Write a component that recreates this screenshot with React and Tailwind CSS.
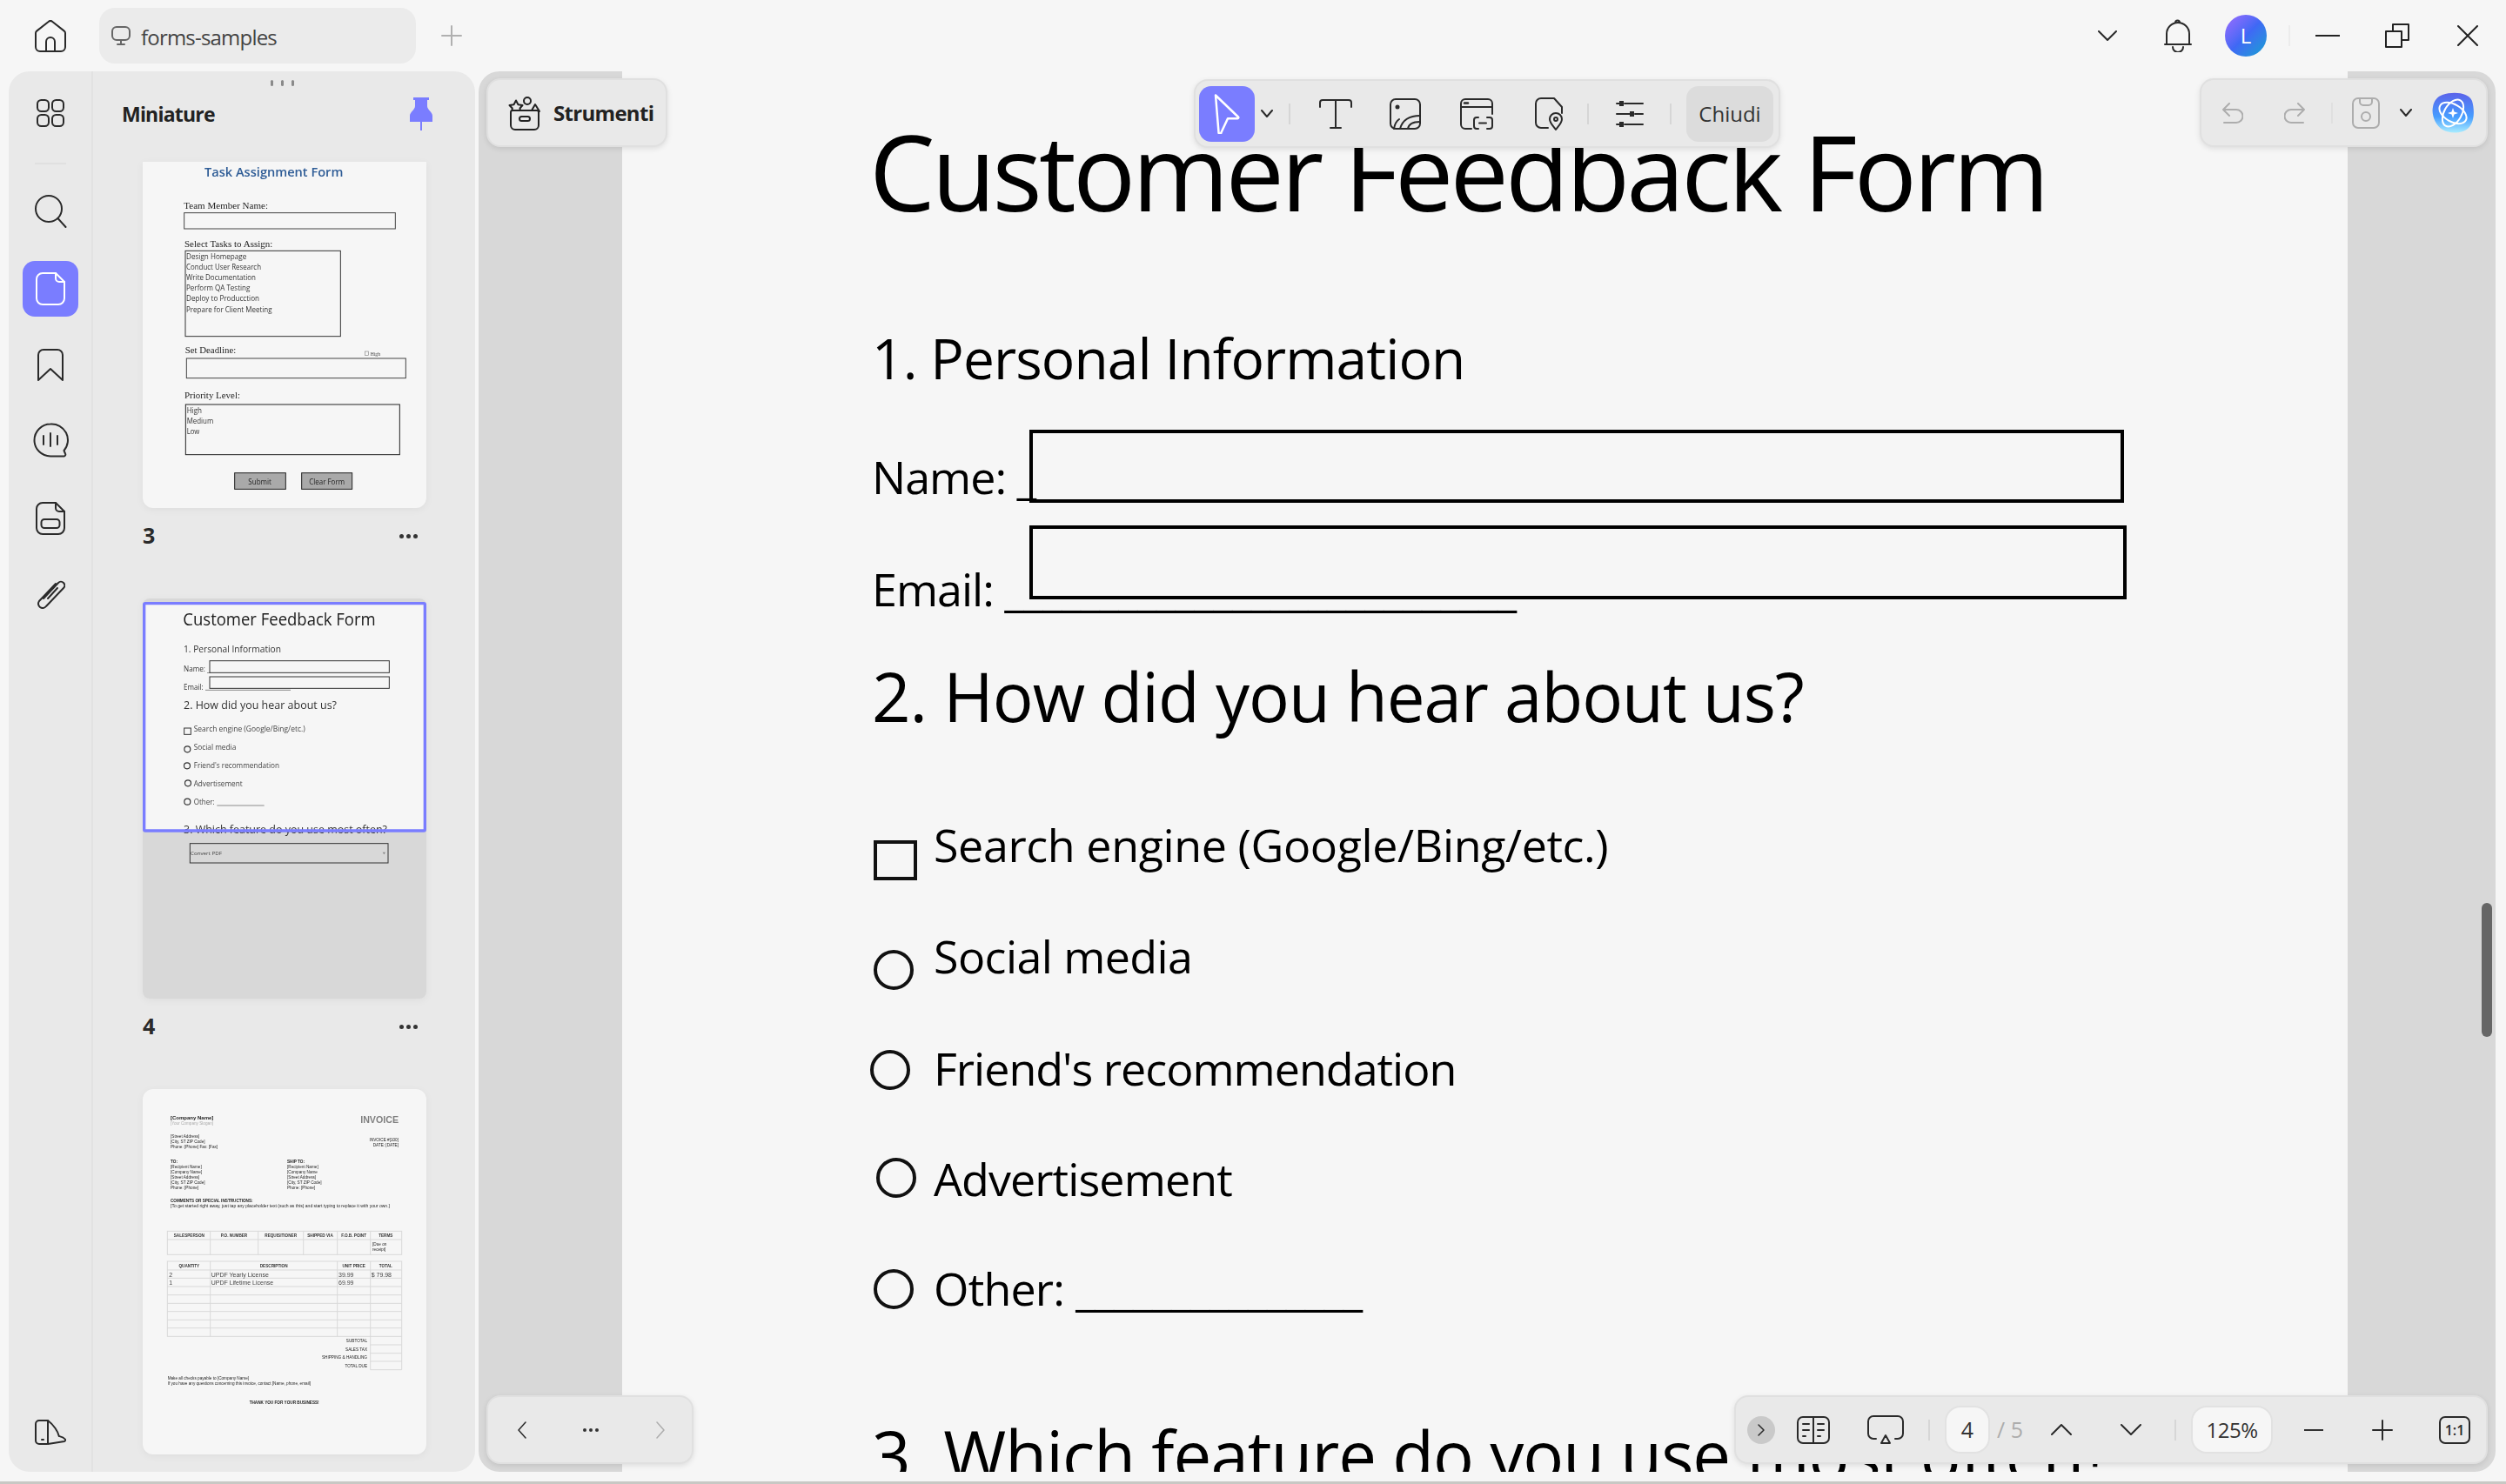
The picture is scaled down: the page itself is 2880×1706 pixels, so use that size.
import React from 'react';

const ACCENT = '#7a7dff';

// shared icon wrapper, size and viewBox are the same in most cases
const Ic = ({ w, h, vb, sw = 2, className = '', children }) => (
  <svg
    width={w}
    height={h}
    viewBox={vb || `0 0 ${w} ${h}`}
    fill="none"
    stroke="currentColor"
    strokeWidth={sw}
    strokeLinecap="round"
    strokeLinejoin="round"
    className={`shrink-0 ${className}`}
  >
    {children}
  </svg>
);

const Chevron = ({ dir = 'down', w = 14, h = 8, sw = 2, className = '' }) => {
  const d = {
    down: `M1 1L${w / 2} ${h - 1}L${w - 1} 1`,
    up: `M1 ${h - 1}L${w / 2} 1L${w - 1} ${h - 1}`,
    left: `M${w - 1} 1L1 ${h / 2}L${w - 1} ${h - 1}`,
    right: `M1 1L${w - 1} ${h / 2}L1 ${h - 1}`,
  }[dir];
  return (
    <Ic w={w} h={h} sw={sw} className={className}>
      <path d={d} />
    </Ic>
  );
};

const Sep = ({ c = 'bg-[#d6d6d6]' }) => <div className={`w-[2px] h-[24px] shrink-0 ${c}`} />;

const FloatBar = ({ className = '', children }) => (
  <div
    className={`absolute flex items-center h-[79px] bg-[#e9e9e9] border-2 border-[#e0e0e0] rounded-[16px] shadow-[0_2px_6px_rgba(0,0,0,0.1)] ${className}`}
  >
    {children}
  </div>
);

const RailButton = ({ h, active, children }) => (
  <div className={`flex items-center justify-center w-full ${h}`}>
    <div
      className={`flex items-center justify-center w-[64px] h-[64px] rounded-[14px] shrink-0 ${
        active ? 'bg-[#7a7dff] text-white' : 'text-[#2a2a2a]'
      }`}
    >
      {children}
    </div>
  </div>
);

const Rail = () => (
  <div className="w-[97px] shrink-0 flex flex-col items-center border-r-2 border-[#e2e2e2] pt-[1px] pb-[30px]">
    <RailButton h="h-[94px]">
      <Ic w={32} h={32}>
        <rect x="1" y="1" width="13" height="13" rx="4.5" />
        <rect x="18" y="1" width="13" height="13" rx="4.5" />
        <rect x="1" y="18" width="13" height="13" rx="4.5" />
        <rect x="18" y="18" width="13" height="13" rx="4.5" />
      </Ic>
    </RailButton>
    <div className="w-[36px] h-[2px] mt-[10px] bg-[#e0e0e0]" />
    <RailButton h="h-[108px]">
      <Ic w={38} h={38}>
        <circle cx="17" cy="16" r="15" />
        <path d="M27.5 27L36.5 37" />
      </Ic>
    </RailButton>
    <RailButton h="h-[70px]" active>
      <Ic w={34} h={38}>
        <path d="M23 1H8a7 7 0 0 0-7 7v22a7 7 0 0 0 7 7h18a7 7 0 0 0 7-7V11z" />
        <path d="M23 1v6a4 4 0 0 0 4 4h6" />
      </Ic>
    </RailButton>
    <RailButton h="h-[106px]">
      <Ic w={30} h={38}>
        <path d="M7 1h16a6 6 0 0 1 6 6v29L15 23 1 36V7a6 6 0 0 1 6-6z" />
      </Ic>
    </RailButton>
    <RailButton h="h-[66px]">
      <Ic w={42} h={40}>
        <path d="M21 1.5a18.5 18.5 0 1 0 0 37h15.5a2 2 0 0 0 1.5-3l-1.500-3.500a18.500 18.500 0 0 0-15.500-30.500z" />
        <path d="M13 15v10M21 12v15M29 15v10" />
      </Ic>
    </RailButton>
    <RailButton h="h-[114px]">
      <Ic w={34} h={38}>
        <path d="M23 1H8a7 7 0 0 0-7 7v22a7 7 0 0 0 7 7h18a7 7 0 0 0 7-7V11z" />
        <path d="M23 1v6a4 4 0 0 0 4 4h6" />
        <rect x="6.500" y="20" width="21" height="10" rx="3.500" />
      </Ic>
    </RailButton>
    <RailButton h="h-[60px]">
      <Ic w={34} h={38}>
        <path d="M9 24L26 6a4.200 4.200 0 0 1 6 6L12 33a5 5 0 0 1-8-6L23 7" />
        <path d="M14 24L25 12" />
      </Ic>
    </RailButton>
    <div className="flex-1" />
    <Ic w={36} h={34} className="text-[#2a2a2a]">
      <path d="M15 5H5a4 4 0 0 0-4 4v19a4 4 0 0 0 4 4h9" />
      <path d="M15 5v27l19-3c1-.2 1.500-1.500.8-2.500-2-2.500-5-3-7-3.500-1-5-6-13-12.800-18z" />
      <path d="M8 27h2" />
    </Ic>
  </div>
);

// page miniatures are little pictures of the PDF pages, so svg with real text
const T = ({ x, y, s, w, f = 'Liberation Sans', c = '#222', a = 'start', len, children }) => (
  <text
    x={x}
    y={y}
    fontSize={s}
    fontWeight={w}
    fontFamily={`'${f}', sans-serif`}
    fill={c}
    stroke="none"
    textAnchor={a}
    dominantBaseline="central"
    textLength={len}
    lengthAdjust={len ? 'spacingAndGlyphs' : undefined}
  >
    {children}
  </text>
);

const Box = ({ x, y, x2, y2, c = '#333', sw = 3, fill = 'none' }) => (
  <rect x={x} y={y} width={x2 - x} height={y2 - y} fill={fill} stroke={c} strokeWidth={sw} />
);

const TaskThumb = () => (
  <svg width="326" height="398" viewBox="42 18 978 1194" className="blur-[0.3px] block">
    <T x={255} y={50} s={44} w={600} f="Open Sans" c="#2e5c96" len={478}>Task Assignment Form</T>
    <T x={184} y={168} s={32} f="Liberation Serif" c="#222" len={290}>Team Member Name:</T>
    <Box x={185} y={194} x2={913} y2={249} c="#444" />
    <T x={186} y={301} s={32} f="Liberation Serif" c="#222" len={304}>Select Tasks to Assign:</T>
    <Box x={189} y={325} x2={724} y2={620} c="#333" />
    {[
      ['Design Homepage', 342, 208],
      ['Conduct User Research', 378, 258],
      ['Write Documentation', 415, 240],
      ['Perform QA Testing', 451, 220],
      ['Deploy to Producction', 488, 252],
      ['Prepare for Client Meeting', 525, 296],
    ].map(([t, y, l]) => (
      <T key={t} x={192} y={y} s={25} f="Open Sans" c="#333" len={l}>{t}</T>
    ))}
    <T x={188} y={666} s={32} f="Liberation Serif" c="#222" len={176}>Set Deadline:</T>
    <rect x="808" y="672" width="12" height="13" fill="none" stroke="#888" strokeWidth="2" />
    <T x={827} y={680} s={16} f="Liberation Serif" c="#444" len={34}>High</T>
    <Box x={193} y={696} x2={949} y2={764} c="#444" />
    <T x={186} y={824} s={32} f="Liberation Serif" c="#222" len={192}>Priority Level:</T>
    <Box x={190} y={855} x2={928} y2={1028} c="#222" />
    <T x={194} y={873} s={25} f="Open Sans" c="#333" len={52}>High</T>
    <T x={194} y={909} s={25} f="Open Sans" c="#333" len={92}>Medium</T>
    <T x={194} y={946} s={25} f="Open Sans" c="#333" len={44}>Low</T>
    <Box x={359} y={1091} x2={535} y2={1147} c="#222" fill="#a9a9a9" />
    <T x={446} y={1119} s={25} f="Open Sans" c="#222" a="middle" len={80}>Submit</T>
    <Box x={590} y={1091} x2={764} y2={1147} c="#222" fill="#a9a9a9" />
    <T x={677} y={1119} s={25} f="Open Sans" c="#222" a="middle" len={122}>Clear Form</T>
  </svg>
);

const FeedbackThumb = () => (
  <svg width="326" height="460" viewBox="42 24 978 1380" className="block">
    <rect x="42" y="24" width="978" height="1380" rx="24" fill="#d8d8d8" />
    <rect x="48" y="41" width="966" height="782" fill="#f6f6f6" />
    <g className="blur-[0.4px]">
      <T x={181} y={94} s={58} f="Open Sans" c="#1c1c1c" len={664}>Customer Feedback Form</T>
      <T x={183} y={198} s={31} f="Open Sans" c="#333" len={336}>1. Personal Information</T>
      <T x={183} y={265} s={25} f="Open Sans" c="#333" len={92}>Name: _</T>
      <Box x={273} y={239} x2={892} y2={280} c="#333" />
      <T x={183} y={328} s={25} f="Open Sans" c="#333" len={68}>Email:</T>
      <path d="M258 340H552" stroke="#555" strokeWidth="2" />
      <Box x={273} y={294} x2={892} y2={334} c="#333" />
      <T x={183} y={390} s={39} f="Open Sans" c="#333" len={528}>2. How did you hear about us?</T>
      <Box x={185} y={471} x2={208} y2={493} c="#333" />
      <T x={218} y={474} s={26} f="Open Sans" c="#444" len={384}>Search engine (Google/Bing/etc.)</T>
      {[[196, 544], [195, 601], [198, 661], [196, 725]].map(([cx, cy]) => (
        <circle key={cy} cx={cx} cy={cy} r="10.500" fill="none" stroke="#333" strokeWidth="3.500" />
      ))}
      <T x={218} y={537} s={26} f="Open Sans" c="#444" len={146}>Social media</T>
      <T x={218} y={600} s={26} f="Open Sans" c="#444" len={295}>Friend's recommendation</T>
      <T x={218} y={663} s={26} f="Open Sans" c="#444" len={168}>Advertisement</T>
      <T x={218} y={725} s={26} f="Open Sans" c="#444" len={72}>Other:</T>
      <path d="M298 738H461" stroke="#555" strokeWidth="2" />
      <T x={183} y={818} s={39} f="Open Sans" c="#333" len={702}>3. Which feature do you use most often?</T>
      <Box x={205} y={869} x2={888} y2={936} c="#333" />
      <T x={207} y={902} s={18} f="Open Sans" c="#444" len={108}>Convert PDF</T>
      <path d="M869 899h10l-5 8z" fill="#888" />
    </g>
    <rect x="47" y="41" width="968" height="784" rx="4" fill="none" stroke={ACCENT} strokeWidth="10" />
  </svg>
);

const InvoiceThumb = () => {
  const s = 14;
  const grey = '#d9d9d9';
  return (
    <svg width="326" height="420" viewBox="42 36 978 1260" className="blur-[0.4px] block">
      <T x={138} y={134} s={18} w={700} c="#222">[Company Name]</T>
      <T x={138} y={155} s={14} c="#aaa">[Your Company Slogan]</T>
      <T x={924} y={141} s={32} w={700} c="#7f7f7f" a="end">INVOICE</T>
      <T x={138} y={200} s={s}>[Street Address]</T>
      <T x={138} y={218} s={s}>[City, ST ZIP Code]</T>
      <T x={138} y={236} s={s}>Phone: [Phone]  Fax: [Fax]</T>
      <T x={924} y={210} s={s} a="end">INVOICE #[100]</T>
      <T x={924} y={228} s={s} a="end">DATE: [DATE]</T>
      {[138, 540].map((x, i) => (
        <g key={x}>
          <T x={x} y={285} s={s} w={700}>{i ? 'SHIP TO:' : 'TO:'}</T>
          <T x={x} y={304} s={s}>[Recipient Name]</T>
          <T x={x} y={322} s={s}>{i ? '[Company Name' : '[Company Name]'}</T>
          <T x={x} y={340} s={s}>[Street Address]</T>
          <T x={x} y={358} s={s}>[City, ST ZIP Code]</T>
          <T x={x} y={377} s={s}>Phone: [Phone]</T>
        </g>
      ))}
      <T x={138} y={420} s={s} w={700}>COMMENTS OR SPECIAL INSTRUCTIONS:</T>
      <T x={138} y={438} s={s} len={756}>[To get started right away, just tap any placeholder text (such as this) and start typing to replace it with your own.]</T>

      {/* first table */}
      <g stroke={grey} strokeWidth="3" fill="none">
        <rect x="127" y="526" width="808" height="81" />
        <path d="M127 555H935M275 526V607M440 526V607M596 526V607M713 526V607M827 526V607" />
        <rect x="127" y="630" width="808" height="259" />
        <path d="M127 660H935M127 688H935M127 717H935M127 746H935M127 775H935M127 803H935M127 832H935M127 860H935M275 630V889M713 630V889M827 630V1004M935 889V1004M827 918H935M827 947H935M827 975H935M827 1004H935" />
      </g>
      {[
        ['SALESPERSON', 202],
        ['P.O. NUMBER', 357],
        ['REQUISITIONER', 518],
        ['SHIPPED VIA', 654],
        ['F.O.B. POINT', 770],
        ['TERMS', 880],
      ].map(([t, x]) => (
        <T key={t} x={x} y={541} s={s} w={700} c="#333" a="middle">{t}</T>
      ))}
      <T x={834} y={570} s={s}>[Due on</T>
      <T x={834} y={588} s={s}>receipt]</T>
      {[
        ['QUANTITY', 202],
        ['DESCRIPTION', 494],
        ['UNIT PRICE', 770],
        ['TOTAL', 880],
      ].map(([t, x]) => (
        <T key={t} x={x} y={645} s={s} w={700} c="#333" a="middle">{t}</T>
      ))}
      <T x={133} y={675} s={21} c="#444">2</T>
      <T x={278} y={675} s={21} c="#444">UPDF Yearly License</T>
      <T x={717} y={675} s={21} c="#444">39.99</T>
      <T x={830} y={675} s={21} c="#444">$ 79.98</T>
      <T x={133} y={703} s={21} c="#444">1</T>
      <T x={278} y={703} s={21} c="#444">UPDF Lifetime License</T>
      <T x={717} y={703} s={21} c="#444">69.99</T>
      <T x={816} y={904} s={s} a="end">SUBTOTAL</T>
      <T x={816} y={933} s={s} a="end">SALES TAX</T>
      <T x={816} y={962} s={s} a="end">SHIPPING &amp; HANDLING</T>
      <T x={816} y={990} s={s} a="end">TOTAL DUE</T>
      <T x={128} y={1033} s={s}>Make all checks payable to [Company Name]</T>
      <T x={128} y={1051} s={s}>If you have any questions concerning this invoice, contact [Name, phone, email]</T>
      <T x={530} y={1116} s={s} w={700} a="middle">THANK YOU FOR YOUR BUSINESS!</T>
    </svg>
  );
};

const PageLabel = ({ n }) => (
  <div className="flex items-center justify-between w-[326px] h-[64px]">
    <span className="text-[25px] font-bold text-[#2a2a2a]">{n}</span>
    <span className="flex gap-[3px] pr-[10px]">
      <i className="w-[5px] h-[5px] rounded-full bg-[#333]" />
      <i className="w-[5px] h-[5px] rounded-full bg-[#333]" />
      <i className="w-[5px] h-[5px] rounded-full bg-[#333]" />
    </span>
  </div>
);

const Sidebar = () => (
  <aside className="w-[536px] shrink-0 flex bg-[#e9e9e9] rounded-[24px] overflow-hidden">
    <Rail />
    <div className="flex-1 flex flex-col min-w-0">
      <div className="flex justify-center gap-[9px] pt-[10px] pr-[4px]">
        <i className="w-[3px] h-[7px] rounded-full bg-[#8a8a8a]" />
        <i className="w-[3px] h-[7px] rounded-full bg-[#8a8a8a]" />
        <i className="w-[3px] h-[7px] rounded-full bg-[#8a8a8a]" />
      </div>
      <div className="flex items-center justify-between h-[50px] mt-[7px] pl-[33px] pr-[49px]">
        <span className="text-[23px] font-bold tracking-[-0.8px] text-[#222]">Miniature</span>
        <svg width="26" height="38" viewBox="0 0 26 38" className="shrink-0">
          <path d="M4 0h18v3h-2v7c0 4 6 7 6 11v7H0v-7c0-4 6-7 6-11V3H4z" fill={ACCENT} />
          <rect x="12" y="28" width="2" height="10" fill={ACCENT} />
        </svg>
      </div>
      <div className="flex flex-col pl-[57px] pr-[46px] pt-[30px]">
        <div className="w-[326px] h-[398px] bg-[#f6f6f6] rounded-b-[12px] shadow-[0_2px_10px_rgba(0,0,0,0.05)]">
          <TaskThumb />
        </div>
        <PageLabel n="3" />
        <div className="h-[40px]" />
        <div className="w-[326px] h-[460px] rounded-[8px] shadow-[0_2px_10px_rgba(0,0,0,0.05)]">
          <FeedbackThumb />
        </div>
        <PageLabel n="4" />
        <div className="h-[40px]" />
        <div className="w-[326px] h-[420px] bg-[#f6f6f6] rounded-[12px] shadow-[0_2px_10px_rgba(0,0,0,0.05)]">
          <InvoiceThumb />
        </div>
      </div>
    </div>
  </aside>
);

const Radio = ({ className }) => (
  <div className={`absolute w-[46px] h-[46px] rounded-full border-[4px] border-[#111] ${className}`} />
);

const DocPage = () => (
  <div className="w-[1983px] shrink-0 h-full bg-[#f6f6f6] relative pl-[284px] pt-[45px] overflow-hidden font-['Open_Sans',sans-serif] text-black">
    <h1 className="text-[120px] leading-[140px] tracking-[-3.8px] whitespace-nowrap">Customer Feedback Form</h1>
    <h2 className="text-[64px] leading-[80px] mt-[105px] ml-[3px] tracking-[-0.9px] whitespace-nowrap">1. Personal Information</h2>
    <p className="text-[52px] leading-[70px] mt-[61px] ml-[3px] tracking-[-1px] whitespace-nowrap">Name: _</p>
    <p className="text-[52px] leading-[70px] mt-[59px] ml-[3px] tracking-[-1px] whitespace-nowrap">
      Email: ___________________________
    </p>
    <h2 className="text-[78px] leading-[100px] mt-[38px] ml-[3px] tracking-[-1px] whitespace-nowrap">2. How did you hear about us?</h2>
    <p className="text-[52px] leading-[70px] mt-[86px] ml-[74px] tracking-[-0.4px] whitespace-nowrap">Search engine (Google/Bing/etc.)</p>
    <p className="text-[52px] leading-[70px] mt-[58px] ml-[74px] tracking-[-0.6px] whitespace-nowrap">Social media</p>
    <p className="text-[52px] leading-[70px] mt-[59px] ml-[74px] tracking-[-1px] whitespace-nowrap">Friend's recommendation</p>
    <p className="text-[52px] leading-[70px] mt-[57px] ml-[74px] tracking-[-0.9px] whitespace-nowrap">Advertisement</p>
    <p className="text-[52px] leading-[70px] mt-[56px] ml-[74px] tracking-[-0.8px] whitespace-nowrap">Other: _______________</p>
    <h2 className="text-[78px] leading-[100px] mt-[106px] ml-[3px] tracking-[-1px] whitespace-nowrap">3. Which feature do you use most often?</h2>

    {/* form widgets sit on top of the PDF page text */}
    <div className="absolute left-[468px] top-[412px] w-[1258px] h-[84px] border-[4px] border-black" />
    <div className="absolute left-[468px] top-[522px] w-[1261px] h-[85px] border-[4px] border-black" />
    <div className="absolute left-[289px] top-[884px] w-[50px] h-[46px] border-[4px] border-[#111]" />
    <Radio className="left-[289px] top-[1010px]" />
    <Radio className="left-[285px] top-[1125px]" />
    <Radio className="left-[292px] top-[1249px]" />
    <Radio className="left-[289px] top-[1377px]" />
  </div>
);

const Viewer = () => (
  <main className="flex-1 relative flex pl-[165px] bg-[#d8d8d8] rounded-[24px] overflow-hidden">
    <DocPage />

    <div className="absolute right-[4px] top-[956px] w-[12px] h-[154px] rounded-full bg-[#666]" />

    <FloatBar className="left-[9px] top-[8px] w-[208px] pl-[23px] gap-[14px] text-[#222]">
      <Ic w={38} h={40} vb="0 0 38 40">
        <path d="M3 19v15a5 5 0 0 0 5 5h22a5 5 0 0 0 5-5V19a2 2 0 0 0-2-2H5a2 2 0 0 0-2 2z" />
        <rect x="13" y="24" width="12" height="5" rx="2.500" />
        <path d="M1.500 11l5-.8L9 5.500l2.500 4.700 5 .8-3 3.500.3 2.500H4.500l.3-2.500z" />
        <circle cx="22" cy="6" r="4" />
        <path d="M27 17l4-7 5 8" />
      </Ic>
      <span className="text-[24px] font-bold tracking-[-0.7px] whitespace-nowrap">Strumenti</span>
    </FloatBar>

    <FloatBar className="left-[822px] top-[9px] w-[674px] pl-[4px] text-[#2a2a2a]">
      <div className="w-[64px] h-[64px] rounded-[14px] bg-[#7a7dff] flex items-center justify-center text-white">
        <Ic w={32} h={46}>
          <path d="M3 1.500l26 25a1 1 0 0 1-.7 1.700H17l-7.500 16a1.500 1.500 0 0 1-3-.3z" strokeWidth="2.500" />
        </Ic>
      </div>
      <div className="w-[28px] flex justify-center">
        <Chevron w={14} h={9} />
      </div>
      <div className="w-[24px] flex justify-center"><Sep /></div>
      <div className="w-[82px] flex justify-center">
        <Ic w={38} h={34}>
          <path d="M1 9V4a3 3 0 0 1 3-3h30a3 3 0 0 1 3 3v5M19 1v32M13 33h12" />
        </Ic>
      </div>
      <div className="w-[78px] flex justify-center">
        <Ic w={36} h={36}>
          <rect x="1" y="1" width="34" height="34" rx="6" />
          <circle cx="9" cy="10" r="1.500" fill="currentColor" />
          <path d="M35 20c-12 0-20 4-23 15M35 27c-8 0-13 2-14 8M5 35c1-6 3-9 6-11" />
        </Ic>
      </div>
      <div className="w-[86px] flex justify-center">
        <Ic w={38} h={36}>
          <path d="M13 35H6a5 5 0 0 1-5-5V6a5 5 0 0 1 5-5h26a5 5 0 0 1 5 5v12M1 10h36" />
          <path d="M5 5.500h4" strokeWidth="2.500" />
          <path d="M21 22h-2a3 3 0 0 0-3 3v7a3 3 0 0 0 3 3h2M31 22h3a3 3 0 0 1 3 3v7a3 3 0 0 1-3 3h-3M22 28.500h8" />
        </Ic>
      </div>
      <div className="w-[80px] flex justify-center">
        <Ic w={32} h={38}>
          <path d="M15 35H7a6 6 0 0 1-6-6V7a6 6 0 0 1 6-6h15l9 10v7" />
          <path d="M24 37c-4-5-7-8-7-12a7 7 0 0 1 14 0c0 4-3 7-7 12z" />
          <circle cx="24" cy="25" r="2" />
        </Ic>
      </div>
      <div className="w-[10px] flex justify-center"><Sep /></div>
      <div className="w-[85px] flex justify-center">
        <Ic w={32} h={34}>
          <path d="M10 5h21M1 5h3M22 17h9M1 17h15M10 29h21M1 29h3" />
          <rect x="4" y="2" width="5" height="6" fill="currentColor" stroke="none" />
          <rect x="16" y="14" width="5" height="6" fill="currentColor" stroke="none" />
          <rect x="4" y="26" width="5" height="6" fill="currentColor" stroke="none" />
        </Ic>
      </div>
      <div className="w-[10px] flex justify-center"><Sep /></div>
      <div className="w-[100px] h-[64px] ml-[13px] rounded-[14px] bg-[#dcdcdc] flex items-center justify-center text-[24px] text-[#333]">
        Chiudi
      </div>
    </FloatBar>

    <FloatBar className="right-[9px] top-[8px] w-[331px] pl-[24px]">
      <Ic w={24} h={24} className="text-[#adadad]">
        <path d="M8 1L1 8l7 7M1 8h15a7 7 0 0 1 0 15H2" />
      </Ic>
      <Ic w={24} h={24} className="text-[#adadad] ml-[47px]">
        <path d="M16 1l7 7-7 7M23 8H8a7 7 0 0 0 0 15h14" />
      </Ic>
      <div className="ml-[30px]"><Sep c="bg-[#e0e0e0]" /></div>
      <Ic w={32} h={36} className="text-[#adadad] ml-[22px]">
        <rect x="1" y="1" width="30" height="34" rx="6" />
        <path d="M9 1v4a4 4 0 0 0 4 4h6a4 4 0 0 0 4-4V1" />
        <circle cx="16" cy="22" r="5" />
      </Ic>
      <Chevron w={14} h={9} className="ml-[23px] text-[#2a2a2a]" />
      <svg width="48" height="48" viewBox="0 0 48 48" className="ml-[23px] shrink-0">
        <defs>
          <linearGradient id="ai-blob" x1="0" y1="0" x2="0" y2="1">
            <stop offset="0" stopColor="#5b63ea" />
            <stop offset="0.6" stopColor="#469dff" />
            <stop offset="1" stopColor="#a8ecff" />
          </linearGradient>
        </defs>
        <path d="M12 3C24-1 42 0 46 10c3 10 3 24-4 31-7 7-22 7-30 2C4 38-1 26 1 17 2 10 6 5 12 3z" fill="url(#ai-blob)" />
        <g fill="none" stroke="#fff" strokeWidth="2">
          <ellipse cx="24" cy="24" rx="17" ry="10" transform="rotate(30 24 24)" />
          <ellipse cx="24" cy="24" rx="17" ry="10" transform="rotate(-60 24 24)" />
        </g>
        <path d="M24 18l1.500 4.500L30 24l-4.500 1.500L24 30l-1.500-4.500L18 24l4.500-1.500z" fill="#fff" />
      </svg>
    </FloatBar>

    <FloatBar className="left-[9px] bottom-[9px] w-[238px] pl-[34px] text-[#2a2a2a]">
      <Chevron dir="left" w={10} h={20} sw={1.500} />
      <span className="ml-[65px] flex gap-[3px]">
        <i className="w-[4px] h-[4px] rounded-full bg-[#333]" />
        <i className="w-[4px] h-[4px] rounded-full bg-[#333]" />
        <i className="w-[4px] h-[4px] rounded-full bg-[#333]" />
      </span>
      <Chevron dir="right" w={10} h={20} sw={1.500} className="ml-[66px] text-[#adadad]" />
    </FloatBar>

    <FloatBar className="right-[9px] bottom-[9px] w-[866px] pl-[13px] text-[#2a2a2a]">
      <div className="w-[32px] h-[32px] rounded-full bg-[#c9c9c9] flex items-center justify-center">
        <Chevron dir="right" w={8} h={14} sw={1.500} />
      </div>
      <Ic w={38} h={32} className="ml-[25px]">
        <rect x="1" y="1" width="36" height="30" rx="6" />
        <path d="M19 1v30M7 9h7M24 9h7M7 16h7M24 16h7M7 23h3M24 23h3" />
      </Ic>
      <Ic w={42} h={34} className="ml-[43px]">
        <path d="M10 27H7a6 6 0 0 1-6-6V7a6 6 0 0 1 6-6h28a6 6 0 0 1 6 6v14a6 6 0 0 1-6 6h-3" />
        <path d="M21 23l5 9H16z" />
      </Ic>
      <div className="ml-[28px]"><Sep /></div>
      <div className="ml-[17px] w-[52px] h-[55px] rounded-[18px] bg-[#f6f6f6] border-2 border-[#e2e2e2] flex items-center justify-center text-[25px] text-[#333]">4</div>
      <span className="ml-[8px] w-[40px] text-[25px] text-[#adadad] whitespace-nowrap">/ 5</span>
      <Chevron dir="up" w={24} h={13} className="ml-[22px]" />
      <Chevron dir="down" w={24} h={13} className="ml-[56px]" />
      <div className="ml-[38px]"><Sep /></div>
      <div className="ml-[17px] w-[94px] h-[55px] rounded-[18px] bg-[#f6f6f6] border-2 border-[#e2e2e2] flex items-center justify-center text-[24px] tracking-[-0.5px] text-[#333]">125%</div>
      <div className="ml-[36px] w-[22px] h-[2px] bg-[#333]" />
      <Ic w={24} h={24} className="ml-[56px]">
        <path d="M12 1v22M1 12h22" />
      </Ic>
      <div className="ml-[53px] w-[36px] h-[32px] rounded-[7px] border-2 border-[#2a2a2a] flex items-center justify-center text-[16px] font-semibold leading-none">1:1</div>
    </FloatBar>
  </main>
);

const TopBar = () => (
  <header className="h-[82px] shrink-0 flex items-center pl-[40px] pr-[32px] text-[#2a2a2a]">
    <Ic w={36} h={37}>
      <path d="M1 15a3 3 0 0 1 1.200-2.400L16 1.700a3.200 3.200 0 0 1 4 0l13.800 10.900A3 3 0 0 1 35 15v16a5 5 0 0 1-5 5H6a5 5 0 0 1-5-5z" />
      <path d="M13 36V25a5 5 0 0 1 10 0v11" />
    </Ic>
    <div className="ml-[38px] w-[364px] h-[64px] rounded-[18px] bg-[#ebebeb] flex items-center pl-[14px] gap-[12px]">
      <Ic w={22} h={22} className="text-[#666]">
        <rect x="1" y="1" width="20" height="15" rx="5" />
        <path d="M11 16v5M7 21h8" />
      </Ic>
      <span className="text-[24px] tracking-[-0.8px] pt-[3px] text-[#444]">forms-samples</span>
    </div>
    <Ic w={24} h={24} className="ml-[29px] text-[#b0b0b0]">
      <path d="M12 1v22M1 12h22" />
    </Ic>
    <div className="flex-1" />
    <Chevron w={22} h={12} />
    <Ic w={32} h={38} className="ml-[54px]">
      <path d="M13 4a2.500 2.500 0 0 1 5 0" />
      <path d="M3 28V17a13 13 0 0 1 26 0v11M1 29h30" />
      <path d="M10 32a6 6 0 0 0 12 0" />
    </Ic>
    <div className="ml-[38px] w-[48px] h-[48px] rounded-full bg-gradient-to-br from-[#9a6bff] via-[#3f68f5] to-[#0a9fd0] flex items-center justify-center text-white text-[24px]">
      L
    </div>
    <div className="ml-[25px]"><Sep c="bg-[#ececec]" /></div>
    <div className="ml-[29px] w-[28px] h-[2px] bg-[#222]" />
    <Ic w={28} h={28} className="ml-[52px] text-[#222]">
      <rect x="1" y="9" width="18" height="18" />
      <path d="M9 9V1h18v18h-8" />
    </Ic>
    <Ic w={24} h={24} className="ml-[55px] text-[#222]">
      <path d="M1 1l22 22M23 1L1 23" />
    </Ic>
  </header>
);

const App = () => (
  <div className="w-[2880px] h-[1706px] flex flex-col overflow-hidden bg-[#f6f6f6] font-['Open_Sans',sans-serif]">
    <TopBar />
    <div className="flex-1 min-h-0 flex pl-[10px] pr-[12px] gap-[4px]">
      <Sidebar />
      <Viewer />
    </div>
    <div className="h-[14px] shrink-0 border-b-[3px] border-[#c8c8c4]" />
  </div>
);

export default App;
